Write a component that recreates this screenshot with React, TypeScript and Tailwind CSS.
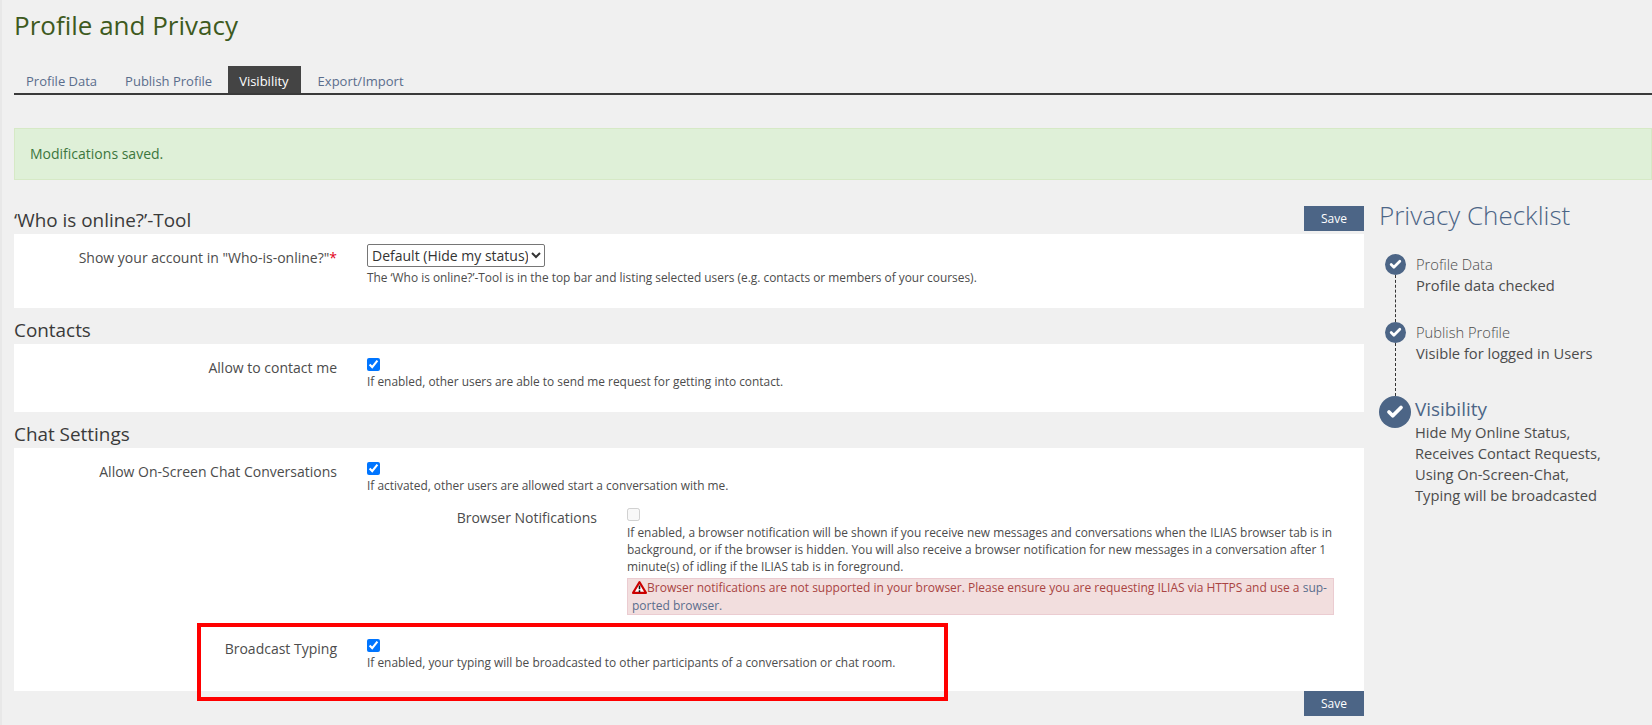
import { Check } from "lucide-react";

const FONT = "font-['Open_Sans',sans-serif]";

const tabs = ["Profile Data", "Publish Profile", "Visibility", "Export/Import"];

const SaveButton = () => (
  <button className="w-[60px] h-[25px] bg-[#4c6586] text-white text-[12px] flex items-center justify-center">
    Save
  </button>
);

const SectionHead = ({ title, save }: { title: string; save?: boolean }) => (
  <div className="flex items-end justify-between">
    <h2 className="text-[18.9px] leading-[24px] mb-[2px] text-[#3a3a3a]">{title}</h2>
    {save && (
      <div className="mb-[3px]">
        <SaveButton />
      </div>
    )}
  </div>
);

const Row = ({
  label,
  required,
  children,
}: {
  label: string;
  required?: boolean;
  children: React.ReactNode;
}) => (
  <div className="flex">
    <div className="w-[323px] shrink-0 text-right text-[14px] leading-[20px] text-[#4c4c4c]">
      {label}
      {required && <span className="text-[#e2001a]">*</span>}
    </div>
    <div className="ml-[30px] w-[947px]">{children}</div>
  </div>
);

const Help = ({ children }: { children: React.ReactNode }) => (
  <p className="text-[11.9px] leading-[17px] text-[#4c4c4c]">{children}</p>
);

const Tick = ({ disabled }: { disabled?: boolean }) =>
  disabled ? (
    <div className="h-[16px] flex items-start">
      <input type="checkbox" disabled className="w-[13px] h-[13px] m-0" />
    </div>
  ) : (
    <div className="h-[15px] flex items-start">
      <input type="checkbox" defaultChecked className="w-[13px] h-[13px] m-0" />
    </div>
  );

const Step = ({
  title,
  lines,
  big,
  height,
}: {
  title: string;
  lines: string[];
  big?: boolean;
  height?: string;
}) => (
  <div className={`flex ${height ?? ""}`}>
    <div className="w-[32px] shrink-0 flex flex-col items-center">
      <div
        className={`rounded-full bg-[#4c6586] text-white flex items-center justify-center shrink-0 ${
          big ? "w-[32px] h-[32px]" : "w-[21px] h-[21px]"
        }`}
      >
        <Check size={big ? 18 : 13} strokeWidth={5} />
      </div>
      {!big && <div className="flex-1 border-l border-dashed border-[#333]" />}
    </div>
    <div className={big ? "ml-[4px]" : "ml-[5px]"}>
      <div
        className={
          big
            ? "text-[18.9px] leading-[26px] text-[#4c6586]"
            : "text-[14.7px] leading-[21px] font-light text-[#4c4c4c]"
        }
      >
        {title}
      </div>
      {lines.map((line) => (
        <div key={line} className="text-[14.7px] leading-[21px] text-[#4c4c4c]">
          {line}
        </div>
      ))}
    </div>
  </div>
);

export default function App() {
  return (
    <div className={`${FONT} bg-[#f0f0f0] h-[725px] w-[1652px] overflow-hidden pl-[12px] border-l-2 border-[#e8e8e8]`}>
      <h1 className="text-[26px] leading-[34px] pt-[8px] h-[66px] text-[#3e5a1e]">Profile and Privacy</h1>

      {/* Tabs */}
      <div className="flex h-[29px] border-b-2 border-[#3a3a3a] text-[13px] text-[#5a6d8c]">
        <div className="flex -ml-[2px]">
          {tabs.map((tab) => (
            <div
              key={tab}
              className={`h-[27px] flex items-center pt-[4px] ${
                tab === "Visibility" ? "bg-[#444444] text-white pl-[11px] pr-[12px] mx-[2px]" : "px-[14px]"
              } ${tab === "Export/Import" ? "ml-[1px]" : ""}`}
            >
              {tab}
            </div>
          ))}
        </div>
      </div>

      {/* Success message */}
      <div className="mt-[33px] h-[52px] flex items-center pl-[15px] pb-[2px] bg-[#dff0d8] border border-[#d6e9c6] text-[14px] text-[#3c763d]">
        Modifications saved.
      </div>

      <div className="flex mt-[26px]">
        <div className="relative w-[1350px] shrink-0">
          <SectionHead title="‘Who is online?’-Tool" save />
          <div className="bg-white h-[74px] pt-[14px]">
            <Row label={'Show your account in "Who-is-online?"'} required>
              <select className="-mt-[4px] mb-[2px] h-[23px] w-[178px] border border-[#767676] rounded-[2px] bg-white text-[14px] text-[#333] block">
                <option>Default (Hide my status)</option>
              </select>
              <Help>The ‘Who is online?’-Tool is in the top bar and listing selected users (e.g. contacts or members of your courses).</Help>
            </Row>
          </div>

          <div className="mt-[10px]">
            <SectionHead title="Contacts" />
          </div>
          <div className="bg-white h-[68px] pt-[14px]">
            <Row label="Allow to contact me">
              <Tick />
              <Help>If enabled, other users are able to send me request for getting into contact.</Help>
            </Row>
          </div>

          <div className="mt-[10px]">
            <SectionHead title="Chat Settings" />
          </div>
          <div className="bg-white h-[243px] pt-[14px]">
            <Row label="Allow On-Screen Chat Conversations">
              <Tick />
              <Help>If activated, other users are allowed start a conversation with me.</Help>
              <div className="flex mt-[14px]">
                <div className="w-[230px] shrink-0 text-right text-[14px] leading-[20px] text-[#4c4c4c]">
                  Browser Notifications
                </div>
                <div className="ml-[30px] w-[708px]">
                  <Tick disabled />
                  <Help>
                    If enabled, a browser notification will be shown if you receive new messages and conversations when the ILIAS browser tab is in background, or if the browser is hidden. You will also receive a browser notification for new messages in a conversation after 1 minute(s) of idling if the ILIAS tab is in foreground.
                  </Help>
                  <div className="mt-[3px] h-[37px] w-[707px] bg-[#f2dede] border border-[#ebccd1] px-[4px] text-[12px] leading-[18px] text-[#a94442]">
                    <svg viewBox="0 0 16 14" className="inline-block w-[15px] h-[13px] align-[-2px]">
                      <path d="M8 1.2 L15 12.8 L1 12.8 Z" fill="#fff" stroke="#cc0000" strokeWidth="2.2" strokeLinejoin="round" />
                      <path d="M8 4.8 V9 M8 10 V12" stroke="#111" strokeWidth="1.7" />
                    </svg>
                    Browser notifications are not supported in your browser. Please ensure you are requesting ILIAS via HTTPS and use a <span className="text-[#5a6d8c]">sup-</span>
                    <br />
                    <span className="text-[#5a6d8c]">ported browser.</span>
                  </div>
                </div>
              </div>
            </Row>
            <div className="mt-[24px]">
              <Row label="Broadcast Typing">
                <Tick />
                <Help>If enabled, your typing will be broadcasted to other participants of a conversation or chat room.</Help>
              </Row>
            </div>
          </div>
          <div className="flex justify-end">
            <SaveButton />
          </div>

          {/* Red annotation box */}
          <div className="absolute left-[183px] top-[417px] w-[751px] h-[78px] border-[4px] border-[#ff0000]" />
        </div>

        {/* Privacy Checklist */}
        <aside className="ml-[15px] w-[270px]">
          <div className="text-[26px] leading-[34px] font-light text-[#4c6586] -mt-[8px]">Privacy Checklist</div>
          <div className="mt-[22px]">
            <Step height="h-[68px]" title="Profile Data" lines={["Profile data checked"]} />
            <Step height="h-[74px]" title="Publish Profile" lines={["Visible for logged in Users"]} />
            <Step big title="Visibility" lines={["Hide My Online Status,", "Receives Contact Requests,", "Using On-Screen-Chat,", "Typing will be broadcasted"]} />
          </div>
        </aside>
      </div>
    </div>
  );
}
